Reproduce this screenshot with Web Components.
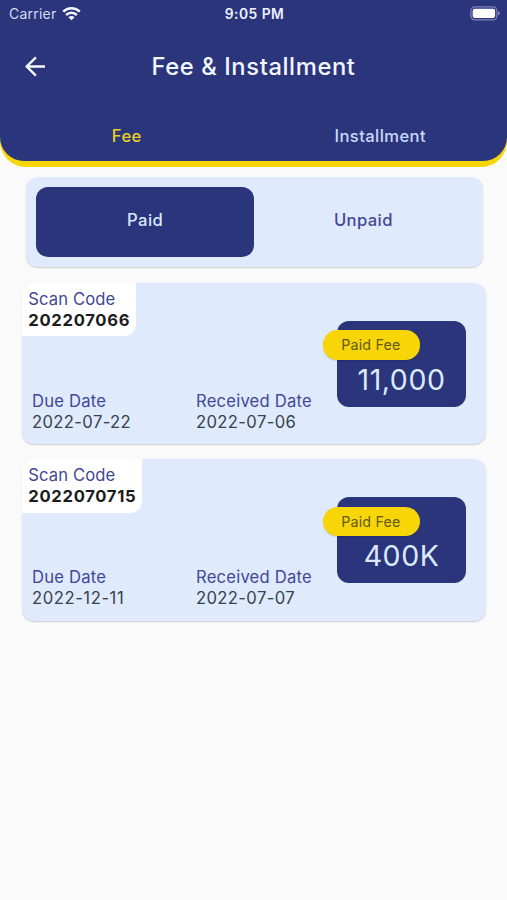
<!DOCTYPE html>
<html lang="en">
<head>
<meta charset="utf-8">
<title>Fee &amp; Installment</title>
<style>
:root{--navy:#2a357b;--yellow:#f7d506;--pale:#dfeafc;--indigo:#434797}
body{margin:0;background:#fafafa;font-family:Inter,"Liberation Sans",sans-serif;font-size:16.6px;height:900px;overflow:hidden}
</style>
</head>
<body>
<fee-screen></fee-screen>
<script>
function define(name, html){
  const t=document.createElement('template');
  t.innerHTML=html;
  customElements.define(name, class extends HTMLElement{
    constructor(){super();this.attachShadow({mode:'open'}).append(t.content.cloneNode(true));}
  });
}

define('status-bar', `
<style>
:host{display:grid;grid-template-columns:1fr auto 1fr;align-items:center;height:27px;padding:0 7px 1px 9px;color:#eef1ff;font-size:14px}
.left{display:flex;align-items:center;gap:5.5px;letter-spacing:.22px;color:#d5dbf3}
.time{font-weight:600;letter-spacing:.5px;font-size:13.8px}
.bat{justify-self:end;display:block}
svg{display:block}
</style>
<div class="left"><span>Carrier</span>
<svg width="19" height="15" viewBox="0 0 19 15" fill="none" stroke="#f4f6ff" stroke-width="2.5"><path d="M1.2 5.7a11.7 11.7 0 0 1 16.6 0"/><path d="M4.1 9a7.6 7.6 0 0 1 10.8 0"/><path d="M9.5 14.3 6.4 11.2a4.4 4.4 0 0 1 6.2 0z" fill="#f4f6ff" stroke="none"/></svg></div>
<span class="time">9:05 PM</span>
<svg class="bat" width="30" height="15" viewBox="0 0 30 15"><rect x=".9" y=".9" width="26" height="13" rx="4" fill="none" stroke="#7f86b8" stroke-width="1.2"/><rect x="2.7" y="2.8" width="22.4" height="9.2" rx="2" fill="#fff"/><path d="M28.2 5.1q1.6.7 1.6 2.2t-1.6 2.2z" fill="#8f96c2"/></svg>`);

define('app-bar', `
<style>
:host{display:grid;grid-template-columns:70px 1fr 70px;align-items:center;height:77px;color:#f3f6ff}
svg{display:block;margin-left:25px}
h1{margin:0;text-align:center;font-size:23.75px;font-weight:500;letter-spacing:.6px;white-space:nowrap}
</style>
<svg width="21" height="21" viewBox="0 0 21 21" fill="none" stroke="#f5f8ff" stroke-width="2.4"><path d="M20 10.5H2.3M10.9 1.3 1.7 10.5l9.2 9.2"/></svg>
<h1><slot></slot></h1>`);

define('tab-item', `
<style>
:host{display:flex;justify-content:center;align-items:center;font-weight:550;letter-spacing:.4px;color:#cbdafb}
:host([active]){color:#ecd020}
</style><slot></slot>`);

define('page-header', `
<style>
:host{display:block;background:var(--yellow);border-radius:0 0 26px 26px;padding-bottom:6px}
.in{background:var(--navy);border-radius:0 0 24px 24px;height:161px}
.tabs{display:grid;grid-template-columns:1fr 1fr;height:62px}
</style>
<div class="in"><status-bar></status-bar><app-bar>Fee &amp; Installment</app-bar>
<div class="tabs"><tab-item active>Fee</tab-item><tab-item>Installment</tab-item></div></div>`);

define('segment-item', `
<style>
:host{display:flex;justify-content:center;align-items:center;border-radius:12px;font-weight:550;letter-spacing:.4px;color:var(--indigo);padding-bottom:4px}
:host([active]){background:var(--navy);color:#dce8fd}
</style><slot></slot>`);

define('segment-switch', `
<style>
:host{display:grid;grid-template-columns:1fr 1fr;box-sizing:border-box;height:90px;margin:10px 24.5px 0 26px;padding:10px;background:var(--pale);border-radius:12px;box-shadow:0 1px 1.5px rgba(0,0,0,.18)}
</style><slot></slot>`);

define('label-value', `
<style>
:host{display:block;line-height:20.8px;white-space:nowrap}
.l{color:var(--indigo);letter-spacing:.22px}
.v{color:#36414f;letter-spacing:var(--value-spacing,.38px)}
:host([strong]) .v{color:#1c1c20;font-weight:700;letter-spacing:.7px}
:host([strong]) .l{letter-spacing:.12px}
</style><div class="l"><slot name="label"></slot></div><div class="v"><slot></slot></div>`);

define('amount-box', `
<style>
:host{display:flex;position:relative;justify-content:center;align-items:flex-end;box-sizing:border-box;width:129px;height:86px;padding-bottom:8.9px;background:var(--navy);border-radius:12px;color:#dce9fd;font-size:28.5px;line-height:36px;letter-spacing:.55px}
.pill{position:absolute;left:-14.5px;top:9.7px;width:97.5px;height:29.5px;border-radius:14.5px;background:var(--yellow);color:#62591f;font-size:14.25px;line-height:29.8px;letter-spacing:.18px;text-align:center;text-indent:-.8px;box-shadow:0 1px 1.5px rgba(0,0,0,.15)}
</style><slot></slot><span class="pill">Paid Fee</span>`);

define('fee-card', `
<style>
:host{display:grid;grid-template-columns:174px 1fr auto;grid-template-rows:53.8px 1fr;box-sizing:border-box;height:161.6px;margin:0 21px 14.9px 22px;background:var(--pale);border-radius:12px;overflow:hidden;box-shadow:0 1px 1.5px rgba(0,0,0,.18)}
.scan{grid-column:1/3;justify-self:start;background:#fff;border-radius:0 0 12px 0;padding:6.3px 6px 0 6.3px;box-sizing:border-box}
.due{align-self:end;padding:0 0 11.6px 10px}
.rec{align-self:end;padding-bottom:11.6px}
.amt{grid-column:3;grid-row:1/3;padding:38px 20px 0 0}
</style>
<div class="scan"><slot name="scan"></slot></div>
<div class="amt"><slot name="amount"></slot></div>
<div class="due"><slot name="due"></slot></div>
<div class="rec"><slot name="received"></slot></div>`);

define('fee-screen', `
<style>
:host{display:block}
.list{padding-top:15.6px}
.wide{--value-spacing:.58px}
</style>
<page-header></page-header>
<segment-switch><segment-item active>Paid</segment-item><segment-item>Unpaid</segment-item></segment-switch>
<div class="list">
<fee-card>
<label-value slot="scan" strong><span slot="label">Scan Code</span>202207066</label-value>
<amount-box slot="amount">11,000</amount-box>
<label-value slot="due"><span slot="label">Due Date</span>2022-07-22</label-value>
<label-value slot="received"><span slot="label">Received Date</span>2022-07-06</label-value>
</fee-card>
<fee-card>
<label-value slot="scan" strong><span slot="label">Scan Code</span>2022070715</label-value>
<amount-box slot="amount">400K</amount-box>
<label-value slot="due" class="wide"><span slot="label">Due Date</span>2022-12-11</label-value>
<label-value slot="received"><span slot="label">Received Date</span>2022-07-07</label-value>
</fee-card>
</div>`);
</script>
</body>
</html>
